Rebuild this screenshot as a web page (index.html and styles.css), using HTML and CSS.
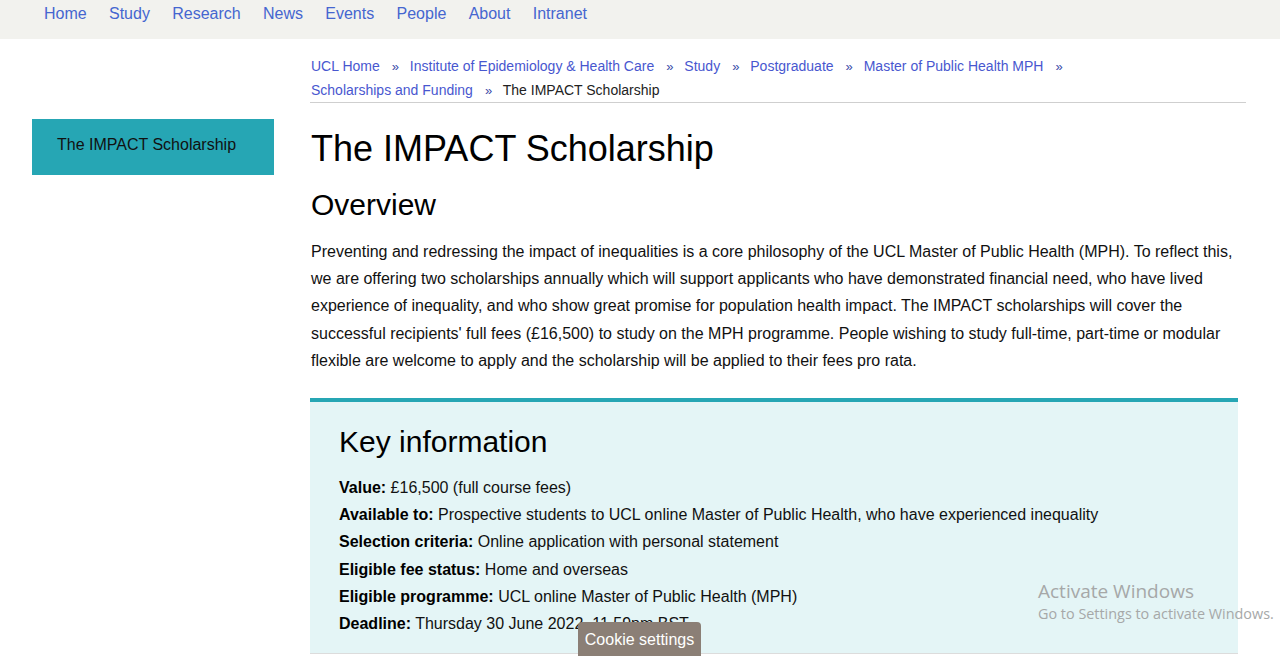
FILE: index.html
```html
<!DOCTYPE html>
<html lang="en">
<head>
<meta charset="utf-8">
<title>The IMPACT Scholarship</title>
<link rel="stylesheet" href="styles.css">
</head>
<body>
<nav class="topnav">
  <a href="#">Home</a>
  <a href="#">Study</a>
  <a href="#">Research</a>
  <a href="#">News</a>
  <a href="#">Events</a>
  <a href="#">People</a>
  <a href="#">About</a>
  <a href="#">Intranet</a>
</nav>
<div class="page">
  <aside class="sidebar">
    <div class="side-item">The IMPACT Scholarship</div>
  </aside>
  <main class="content">
    <div class="crumbs">
      <span class="crumb"><a href="#">UCL Home</a><span class="sep">»</span></span>
      <span class="crumb"><a href="#">Institute of Epidemiology &amp; Health Care</a><span class="sep">»</span></span>
      <span class="crumb"><a href="#">Study</a><span class="sep">»</span></span>
      <span class="crumb"><a href="#">Postgraduate</a><span class="sep">»</span></span>
      <span class="crumb"><a href="#">Master of Public Health MPH</a><span class="sep">»</span></span>
      <span class="crumb"><a href="#">Scholarships and Funding</a><span class="sep">»</span></span>
      <span class="crumb current">The IMPACT Scholarship</span>
    </div>
    <h1 class="title">The IMPACT Scholarship</h1>
    <h2 class="subtitle">Overview</h2>
    <p class="body">Preventing and redressing the impact of inequalities is a core philosophy of the UCL Master of Public Health (MPH). To reflect this, we are offering two scholarships annually which will support applicants who have demonstrated financial need, who have lived experience of inequality, and who show great promise for population health impact. The IMPACT scholarships will cover the successful recipients' full fees (£16,500) to study on the MPH programme. People wishing to study full-time, part-time or modular flexible are welcome to apply and the scholarship will be applied to their fees pro rata.</p>
    <section class="keybox">
      <h2 class="key-title">Key information</h2>
      <p class="kline"><b>Value:</b> £16,500 (full course fees)</p>
      <p class="kline"><b>Available to:</b> Prospective students to UCL online Master of Public Health, who have experienced inequality</p>
      <p class="kline"><b>Selection criteria:</b> Online application with personal statement</p>
      <p class="kline"><b>Eligible fee status:</b> Home and overseas</p>
      <p class="kline"><b>Eligible programme:</b> UCL online Master of Public Health (MPH)</p>
      <p class="kline"><b>Deadline:</b> Thursday 30 June 2022, 11.59pm BST</p>
    </section>
  </main>
</div>
<div class="watermark">
  <div class="wm-title">Activate Windows</div>
  <div class="wm-sub">Go to Settings to activate Windows.</div>
</div>
<button class="cookie">Cookie settings</button>
</body>
</html>
```
FILE: styles.css
```css
html, body {
  margin: 0;
  padding: 0;
  background: #ffffff;
  font-family: "Liberation Sans", Arial, sans-serif;
  color: #000000;
  overflow: hidden;
}
.topnav {
  height: 39px;
  background: #f2f2ee;
  display: flex;
  gap: 22.3px;
  padding-left: 44px;
  box-sizing: border-box;
  align-items: flex-start;
}
.topnav a {
  font-size: 16px;
  line-height: 27px;
  color: #4566d0;
  text-decoration: none;
}
.page {
  display: flex;
  padding-left: 32px;
}
.sidebar {
  width: 242px;
  flex: none;
  padding-top: 80px;
}
.side-item {
  background: #26a6b4;
  height: 56px;
  box-sizing: border-box;
  padding: 16px 0 0 25px;
  font-size: 16px;
  line-height: 20px;
  color: #111;
}
.content {
  width: 936px;
  margin-left: 36px;
  padding-top: 15px;
}
.crumbs {
  font-size: 14px;
  line-height: 24px;
  border-bottom: 1px solid #cfcfcf;
  color: #222;
  padding-left: 1px;
}
.crumb {
  white-space: nowrap;
  margin-right: -4px;
}
.crumbs a {
  color: #4857cf;
  text-decoration: none;
}
.crumbs .sep {
  color: #3a4aa8;
  margin: 0 11px 0 12px;
  font-size: 13px;
  line-height: 1;
}
.title {
  font-weight: normal;
  font-size: 36px;
  line-height: 44px;
  margin: 24px 0 0 1px;
}
.subtitle {
  font-weight: normal;
  font-size: 30px;
  line-height: 36px;
  margin: 16px 0 0 1px;
}
.body {
  font-size: 16px;
  line-height: 27.2px;
  margin: 15px 0 0 1px;
  width: 930px;
  color: #111;
}
.keybox {
  width: 928px;
  box-sizing: border-box;
  margin-top: 24px;
  background: #e4f5f6;
  border-top: 4px solid #26a6b4;
  border-bottom: 1px solid #dcdcdc;
  padding: 22px 28px 16px 29px;
}
.key-title {
  font-weight: normal;
  font-size: 30px;
  line-height: 36px;
  margin: 0 0 14px 0;
}
.kline {
  margin: 0;
  font-size: 16px;
  line-height: 27.2px;
  color: #111;
}
.kline b {
  color: #000;
}
.watermark {
  position: absolute;
  left: 1038px;
  top: 578px;
  font-family: "Open Sans", "DejaVu Sans", sans-serif;
  color: #a6a8a8;
}
.wm-title {
  font-size: 19px;
  line-height: 26px;
}
.wm-sub {
  font-size: 14.4px;
  line-height: 20px;
}
.cookie {
  position: absolute;
  left: 578px;
  top: 622px;
  width: 123px;
  height: 40px;
  border: none;
  border-radius: 4px 4px 0 0;
  background: #8b7f76;
  color: #ffffff;
  font-family: "Liberation Sans", Arial, sans-serif;
  font-size: 16px;
  padding: 0 0 4px 0;
  line-height: 22px;
  text-align: center;
}
```
